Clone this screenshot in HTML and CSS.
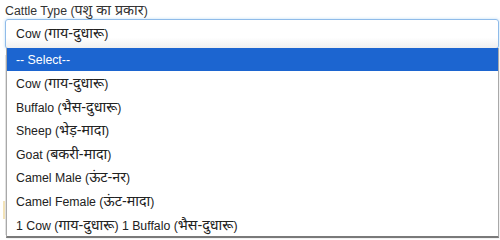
FILE: index.html
```html
<!DOCTYPE html>
<html lang="hi">
<head>
<meta charset="utf-8">
<title>Cattle Type</title>
<link rel="stylesheet" href="styles.css">
</head>
<body>
<div class="form-group">
  <label class="field-label">Cattle Type (<span class="dev">पशु का प्रकार</span>)</label>
  <div class="select-box">Cow (<span class="dev">गाय-दुधारू</span>)</div>
  <div class="under-row"><span class="under-mark"></span></div>
  <ul class="dropdown">
    <li class="option selected">-- Select--</li>
    <li class="option">Cow (<span class="dev">गाय-दुधारू</span>)</li>
    <li class="option">Buffalo (<span class="dev">भैस-दुधारू</span>)</li>
    <li class="option">Sheep (<span class="dev">भेड़-मादा</span>)</li>
    <li class="option">Goat (<span class="dev">बकरी-मादा</span>)</li>
    <li class="option">Camel Male (<span class="dev">ऊंट-नर</span>)</li>
    <li class="option">Camel Female (<span class="dev">ऊंट-मादा</span>)</li>
    <li class="option">1 Cow (<span class="dev">गाय-दुधारू</span>) 1 Buffalo (<span class="dev">भैस-दुधारू</span>)</li>
  </ul>
</div>
</body>
</html>
```

FILE: styles.css
```css
html, body {
  margin: 0;
  padding: 0;
  background: #fff;
}

body {
  font-family: "Liberation Sans", Arial, "Noto Sans", sans-serif;
  font-size: 12.3px;
  color: #333;
}

.dev {
  font-size: 14.3px;
  line-height: 1;
}

.form-group {
  position: relative;
  padding: 3px 1px 0 5px;
  height: 236px;
}

.field-label {
  display: block;
  line-height: 16px;
  height: 16px;
  color: #333;
}

.select-box {
  box-sizing: border-box;
  height: 30px;
  line-height: 29px;
  padding-left: 10px;
  border: 1px solid #8fbbe9;
  border-radius: 3px;
  background: linear-gradient(#fff 0%, #fff 62%, #efefef 100%);
  box-shadow: 0 0 3px rgba(102, 175, 233, 0.45);
  color: #222;
}

.under-row {
  margin-top: 6px;
  height: 180px;
  border-left: 1px solid #e2e2e2;
  position: relative;
}

.under-mark {
  position: absolute;
  left: -3px;
  top: 146px;
  width: 2px;
  height: 18px;
  background: #f3e3b8;
}

.dropdown {
  position: absolute;
  top: 48px;
  left: 6px;
  width: 493px;
  box-sizing: border-box;
  margin: 0;
  padding: 0;
  list-style: none;
  background: #fff;
  border: 1px solid #a9a9a9;
  border-top: 0;
  border-bottom: 2px solid #7a7a7a;
  display: flex;
  flex-direction: column;
  box-shadow: 1px 1px 2px rgba(0, 0, 0, 0.08);
}

.option {
  box-sizing: border-box;
  height: 23.6px;
  padding-top: 4px;
  line-height: 19.6px;
  padding-left: 9px;
  color: #222;
  white-space: nowrap;
}

.option.selected {
  background: #1c65d0;
  color: #fff;
  height: 23px;
  padding-top: 1px;
  line-height: 22px;
}
```
